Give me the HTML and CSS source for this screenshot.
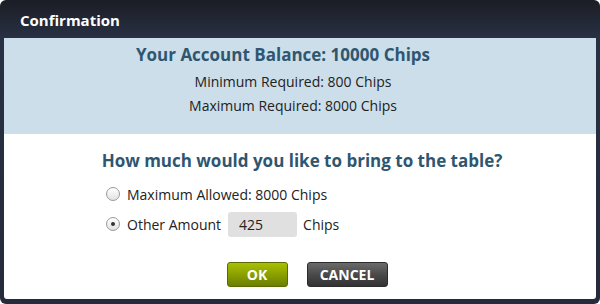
FILE: index.html
```html
<!DOCTYPE html>
<html>
<head>
<meta charset="utf-8">
<link rel="stylesheet" href="styles.css">
</head>
<body>
<div class="dialog">
  <div class="titlebar">Confirmation</div>
  <div class="content">
    <div class="balance">
      <div class="balance-title">Your Account Balance: 10000 Chips</div>
      <div class="balance-line">Minimum Required: 800 Chips</div>
      <div class="balance-line">Maximum Required: 8000 Chips</div>
    </div>
    <div class="question">How much would you like to bring to the table?</div>
    <div class="options">
      <div class="option">
        <span class="radio"></span>
        <span class="label">Maximum Allowed: 8000 Chips</span>
      </div>
      <div class="option">
        <span class="radio checked"></span>
        <span class="label">Other Amount</span>
        <span class="amount">425</span>
        <span class="label">Chips</span>
      </div>
    </div>
    <div class="buttons">
      <button class="btn btn-ok">OK</button>
      <button class="btn btn-cancel">CANCEL</button>
    </div>
  </div>
</div>
</body>
</html>
```
FILE: styles.css
```css
html, body {
  margin: 0;
  padding: 0;
  background: #ffffff;
}
.dialog {
  width: 600px;
  height: 304px;
  box-sizing: border-box;
  padding: 0 4px 5px 4px;
  border-radius: 6px;
  background: linear-gradient(#1a1d24 0px, #283043 38px, #252b3a 100%);
  display: flex;
  flex-direction: column;
  font-family: "Open Sans", sans-serif;
}
.titlebar {
  height: 38px;
  box-sizing: border-box;
  padding-left: 16px;
  display: flex;
  align-items: center;
  color: #ffffff;
  font-weight: 700;
  font-size: 15px;
  padding-top: 1px;
}
.content {
  flex: 1;
  background: #ffffff;
  border-radius: 0 0 3px 3px;
  display: flex;
  flex-direction: column;
  overflow: hidden;
}
.balance {
  background: #cbdeea;
  height: 96px;
  flex: none;
  box-sizing: border-box;
  padding-top: 4px;
  text-align: center;
  color: #222222;
}
.balance-title {
  color: #2f5670;
  font-weight: 700;
  font-size: 17px;
  line-height: 26px;
  padding-right: 34px;
  margin-bottom: 2px;
}
.balance-line {
  font-size: 14px;
  line-height: 24px;
  padding-right: 14px;
}
.question {
  color: #2f5670;
  font-weight: 700;
  font-size: 17px;
  line-height: 26px;
  text-align: center;
  margin-top: 14px;
  padding-left: 4px;
}
.options {
  display: flex;
  flex-direction: column;
  padding-left: 102px;
  margin-top: 7px;
  gap: 4px;
}
.option {
  display: flex;
  align-items: center;
  height: 26px;
  font-size: 14px;
  color: #222222;
}
.radio {
  width: 12px;
  height: 12px;
  border-radius: 50%;
  border: 1px solid #9a9a9a;
  background: linear-gradient(#ffffff, #e2e2e2);
  margin-right: 7px;
  position: relative;
  flex: none;
}
.radio.checked::after {
  content: "";
  position: absolute;
  left: 4px;
  top: 4px;
  width: 4px;
  height: 4px;
  border-radius: 50%;
  background: #333333;
}
.amount {
  width: 69px;
  height: 25px;
  box-sizing: border-box;
  background: #e0e0e0;
  border-radius: 3px;
  margin: 0 6px 0 7px;
  padding-left: 11px;
  line-height: 25px;
  font-size: 14px;
}
.buttons {
  display: flex;
  justify-content: center;
  gap: 19px;
  margin-top: 25px;
  padding-left: 14px;
}
.btn {
  height: 25px;
  box-sizing: border-box;
  border-radius: 3px;
  font-family: "Open Sans", sans-serif;
  font-weight: 700;
  font-size: 14px;
  color: #ffffff;
  padding: 0;
  cursor: pointer;
}
.btn-ok {
  width: 61px;
  border: 1px solid #5b6a00;
  background: linear-gradient(#a9c000, #8ba000 50%, #6c7f00);
}
.btn-cancel {
  width: 81px;
  border: 1px solid #2b2b2b;
  background: linear-gradient(#6a6a6a, #4a4a4a 50%, #333333);
}
```
